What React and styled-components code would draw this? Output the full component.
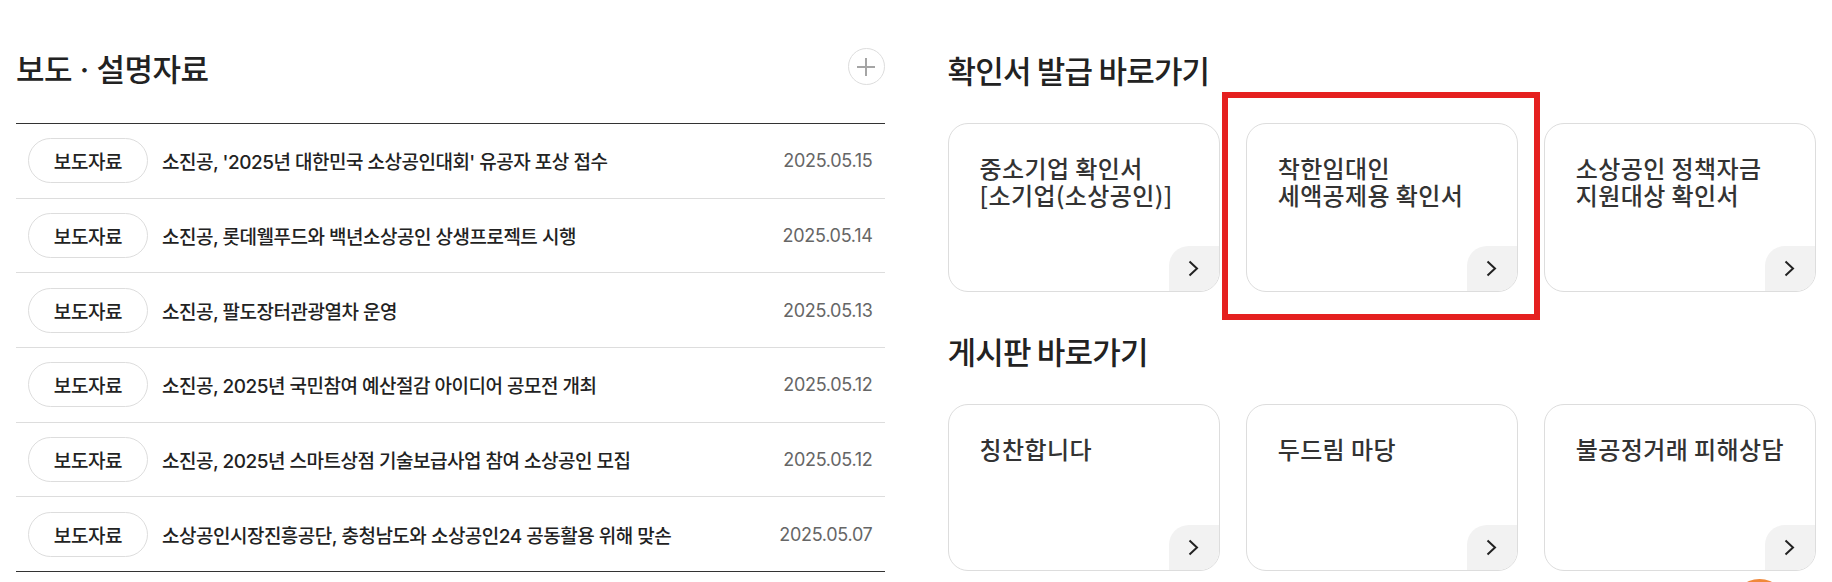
import React from 'react';
import styled, { createGlobalStyle } from 'styled-components';

const GlobalStyle = createGlobalStyle`
  html, body {
    margin: 0;
    padding: 0;
    background: #fff;
  }
  body {
    font-family: Inter, "Noto Sans CJK KR", sans-serif;
    color: #222;
  }
  * {
    box-sizing: border-box;
  }
`;

const Page = styled.div`
  position: relative;
  width: 1832px;
  height: 582px;
  overflow: hidden;
  display: grid;
  grid-template-columns: 1fr 1fr;
  column-gap: 63px;
  padding: 50px 16px 0;
`;

const NewsSection = styled.section`
  display: flex;
  flex-direction: column;
`;

const SectionHead = styled.div`
  display: flex;
  justify-content: space-between;
  align-items: flex-start;
  margin-bottom: 33px;
`;

const Title = styled.h2`
  margin: 0;
  font-family: ${(p) => (p.$pretendard ? 'Inter, ' : '')}"Noto Sans CJK KR", sans-serif;
  font-size: 31px;
  line-height: 40px;
  font-weight: 500;
  letter-spacing: ${(p) => (p.$pretendard ? '-0.5px' : '-0.8px')};
  color: #222;
  margin-top: ${(p) => p.$top || 0}px;
`;

const MoreButton = styled.button`
  width: 37px;
  height: 37px;
  margin-top: -2px;
  border: 1px solid #ddd;
  border-radius: 50%;
  background: #fff;
  padding: 0;
  display: flex;
  align-items: center;
  justify-content: center;
  cursor: pointer;
`;

const NewsList = styled.ul`
  list-style: none;
  margin: 0;
  padding: 0;
  border-top: 1px solid #333;
`;

const NewsRow = styled.li`
  height: 74.67px;
  display: flex;
  align-items: center;
  padding: 0 12px;
  border-bottom: 1px solid #ddd;
  &:last-child {
    border-bottom-color: #333;
  }
`;

const Badge = styled.span`
  flex: none;
  width: 120px;
  height: 45px;
  border: 1px solid #ddd;
  border-radius: 23px;
  display: flex;
  align-items: center;
  justify-content: center;
  font-size: 19px;
  font-weight: 500;
  letter-spacing: -0.4px;
  color: #222;
`;

const NewsTitle = styled.a`
  flex: 1;
  margin-left: 14px;
  font-size: 19px;
  font-weight: 500;
  letter-spacing: -0.5px;
  color: #222;
  text-decoration: none;
  white-space: nowrap;
  overflow: hidden;
`;

const NewsDate = styled.span`
  flex: none;
  font-family: Inter, sans-serif;
  font-size: 18px;
  letter-spacing: -0.3px;
  color: #666;
`;

const LinkSection = styled.section`
  display: flex;
  flex-direction: column;
`;

const CardGrid = styled.div`
  display: grid;
  grid-template-columns: repeat(3, 1fr);
  column-gap: 26px;
  margin-top: 33px;
`;

const Card = styled.a`
  position: relative;
  height: ${(p) => p.$h}px;
  border: 1px solid #ddd;
  border-radius: 20px;
  display: flex;
  flex-direction: column;
  text-decoration: none;
  background: #fff;
`;

const CardLabel = styled.span`
  padding: 30px 31px 0;
  font-family: "Noto Sans CJK KR", sans-serif;
  font-size: 24px;
  line-height: 27px;
  font-weight: 500;
  letter-spacing: 0.4px;
  color: #333;
  white-space: pre-line;
`;

const ArrowBox = styled.span`
  margin-top: auto;
  align-self: flex-end;
  width: 50px;
  height: 45px;
  background: #f2f2f2;
  border-radius: 20px 0 19px 0;
  display: flex;
  align-items: center;
  justify-content: center;
`;

const Highlight = styled.span`
  position: absolute;
  top: -32px;
  left: -25px;
  right: -23px;
  bottom: -29px;
  border: 6px solid #e5201f;
  pointer-events: none;
`;

const FloatButton = styled.span`
  position: absolute;
  left: 1732px;
  top: 579px;
  width: 55px;
  height: 55px;
  border-radius: 50%;
  background: #f0883a;
`;

const Plus = () => (
  <svg width="20" height="20" viewBox="0 0 20 20">
    <path d="M10 1v18M1 10h18" stroke="#a5a5a5" strokeWidth="2" fill="none" />
  </svg>
);

const Chevron = () => (
  <svg width="11" height="17" viewBox="0 0 11 17">
    <polyline points="1.5,1.5 9,8.5 1.5,15.5" stroke="#222" strokeWidth="2" fill="none" />
  </svg>
);

const news = [
  { title: "소진공, '2025년 대한민국 소상공인대회' 유공자 포상 접수", date: '2025.05.15' },
  { title: '소진공, 롯데웰푸드와 백년소상공인 상생프로젝트 시행', date: '2025.05.14' },
  { title: '소진공, 팔도장터관광열차 운영', date: '2025.05.13' },
  { title: '소진공, 2025년 국민참여 예산절감 아이디어 공모전 개최', date: '2025.05.12' },
  { title: '소진공, 2025년 스마트상점 기술보급사업 참여 소상공인 모집', date: '2025.05.12' },
  { title: '소상공인시장진흥공단, 충청남도와 소상공인24 공동활용 위해 맞손', date: '2025.05.07' },
];

const certs = [
  { label: '중소기업 확인서\n[소기업(소상공인)]' },
  { label: '착한임대인\n세액공제용 확인서', marked: true },
  { label: '소상공인 정책자금\n지원대상 확인서' },
];

const boards = [
  { label: '칭찬합니다' },
  { label: '두드림 마당' },
  { label: '불공정거래 피해상담' },
];

function LinkCard({ label, marked, h }) {
  return (
    <Card href="#" $h={h}>
      <CardLabel>{label}</CardLabel>
      <ArrowBox>
        <Chevron />
      </ArrowBox>
      {marked && <Highlight />}
    </Card>
  );
}

export default function App() {
  return (
    <>
      <GlobalStyle />
      <Page>
        <NewsSection>
          <SectionHead>
            <Title $pretendard>보도 · 설명자료</Title>
            <MoreButton aria-label="더보기">
              <Plus />
            </MoreButton>
          </SectionHead>
          <NewsList>
            {news.map((n) => (
              <NewsRow key={n.title}>
                <Badge>보도자료</Badge>
                <NewsTitle href="#">{n.title}</NewsTitle>
                <NewsDate>{n.date}</NewsDate>
              </NewsRow>
            ))}
          </NewsList>
        </NewsSection>
        <LinkSection>
          <Title>확인서 발급 바로가기</Title>
          <CardGrid>
            {certs.map((c) => (
              <LinkCard key={c.label} {...c} h={169} />
            ))}
          </CardGrid>
          <Title $top={39}>게시판 바로가기</Title>
          <CardGrid>
            {boards.map((c) => (
              <LinkCard key={c.label} {...c} h={167} />
            ))}
          </CardGrid>
        </LinkSection>
        <FloatButton />
      </Page>
    </>
  );
}
